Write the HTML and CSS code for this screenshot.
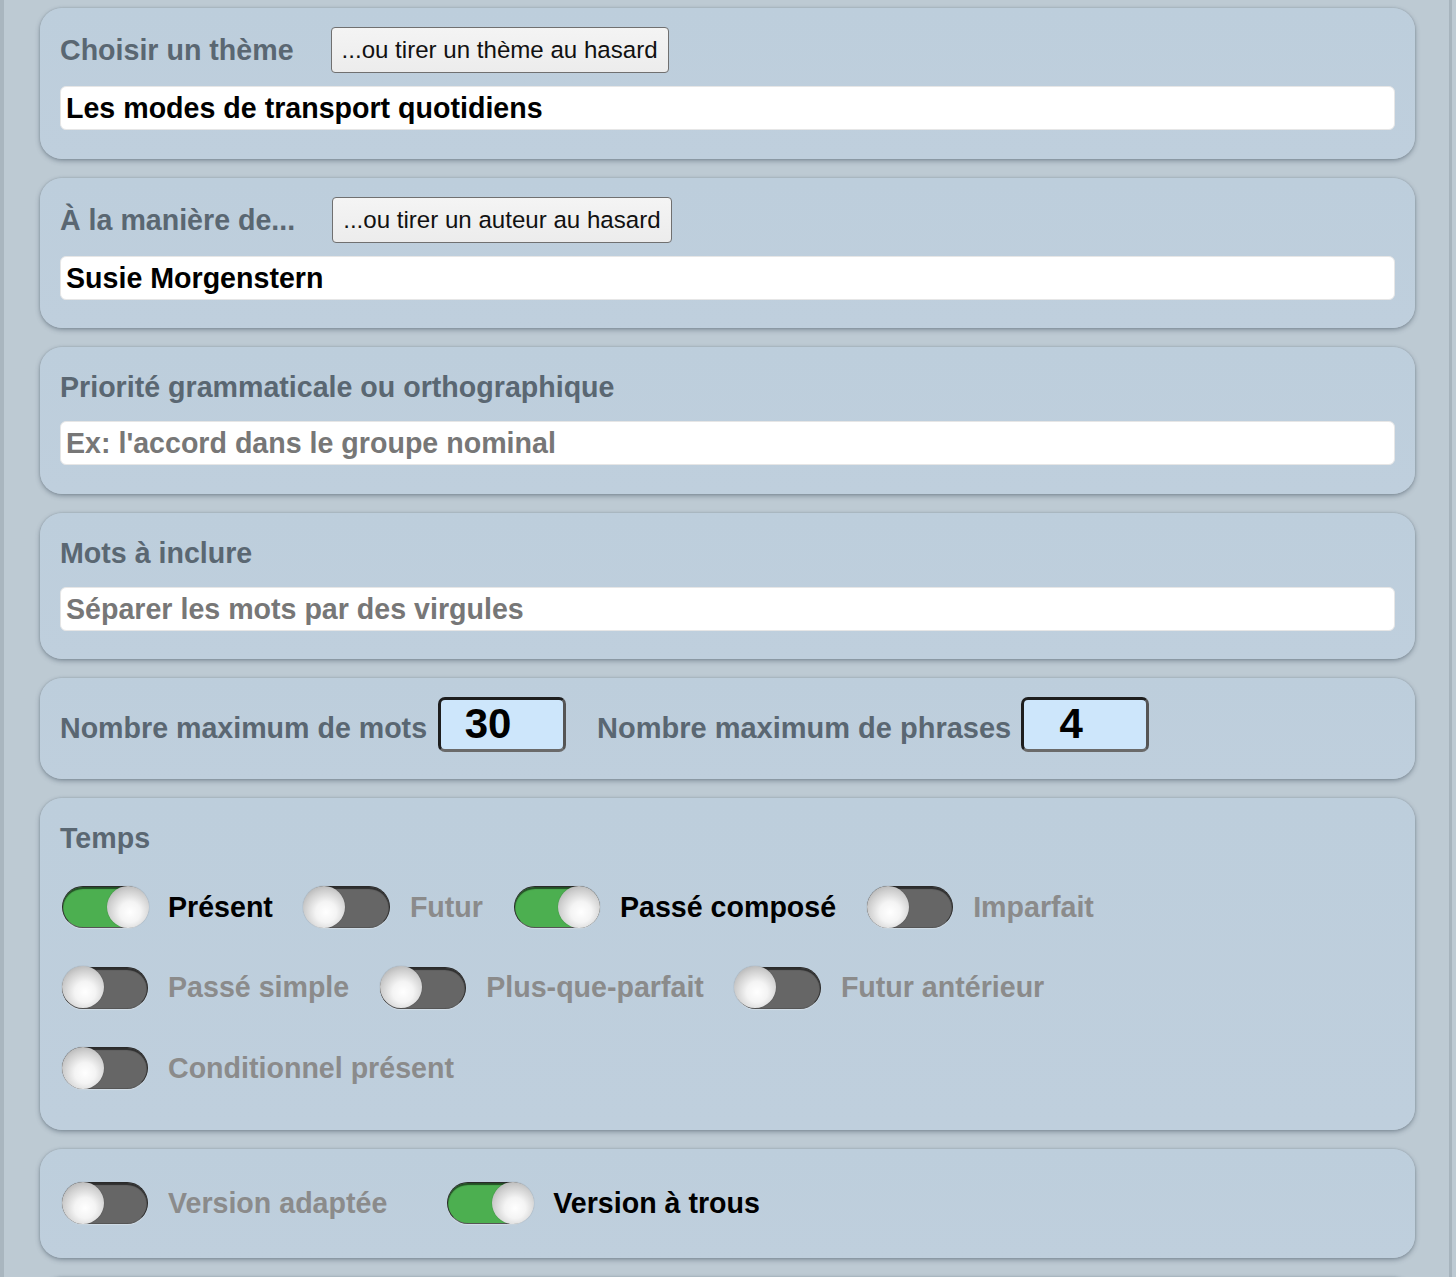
FILE: index.html
```html
<!DOCTYPE html>
<html lang="fr">
<head>
<meta charset="utf-8">
<title>Dictée</title>
<link rel="stylesheet" href="styles.css">
</head>
<body>
<div class="page">
  <section class="card">
    <div class="card-head">
      <span class="card-title">Choisir un thème</span>
      <button class="pick-btn">...ou tirer un thème au hasard</button>
    </div>
    <input class="field" type="text" value="Les modes de transport quotidiens">
  </section>

  <section class="card">
    <div class="card-head">
      <span class="card-title">À la manière de...</span>
      <button class="pick-btn">...ou tirer un auteur au hasard</button>
    </div>
    <input class="field" type="text" value="Susie Morgenstern">
  </section>

  <section class="card">
    <div class="card-head">
      <span class="card-title">Priorité grammaticale ou orthographique</span>
    </div>
    <input class="field" type="text" placeholder="Ex: l'accord dans le groupe nominal">
  </section>

  <section class="card">
    <div class="card-head">
      <span class="card-title">Mots à inclure</span>
    </div>
    <input class="field" type="text" placeholder="Séparer les mots par des virgules">
  </section>

  <section class="card card-numbers">
    <label class="num-label">Nombre maximum de mots</label>
    <input class="num-box" type="text" value="30">
    <label class="num-label">Nombre maximum de phrases</label>
    <input class="num-box" type="text" value="4">
  </section>

  <section class="card card-tenses">
    <div class="card-head">
      <span class="card-title">Temps</span>
    </div>
    <div class="toggles">
      <div class="toggle-row">
        <div class="toggle-item on"><span class="switch"><span class="knob"></span></span><span class="toggle-label">Présent</span></div>
        <div class="toggle-item"><span class="switch"><span class="knob"></span></span><span class="toggle-label">Futur</span></div>
        <div class="toggle-item on"><span class="switch"><span class="knob"></span></span><span class="toggle-label">Passé composé</span></div>
        <div class="toggle-item"><span class="switch"><span class="knob"></span></span><span class="toggle-label">Imparfait</span></div>
      </div>
      <div class="toggle-row">
        <div class="toggle-item"><span class="switch"><span class="knob"></span></span><span class="toggle-label">Passé simple</span></div>
        <div class="toggle-item"><span class="switch"><span class="knob"></span></span><span class="toggle-label">Plus-que-parfait</span></div>
        <div class="toggle-item"><span class="switch"><span class="knob"></span></span><span class="toggle-label">Futur antérieur</span></div>
      </div>
      <div class="toggle-row">
        <div class="toggle-item"><span class="switch"><span class="knob"></span></span><span class="toggle-label">Conditionnel présent</span></div>
      </div>
    </div>
  </section>

  <section class="card card-versions">
    <div class="toggle-item"><span class="switch"><span class="knob"></span></span><span class="toggle-label">Version adaptée</span></div>
    <div class="toggle-item on"><span class="switch"><span class="knob"></span></span><span class="toggle-label">Version à trous</span></div>
  </section>

  <section class="card card-next"></section>
</div>
</body>
</html>
```

FILE: styles.css
```css
html, body {
  margin: 0;
  padding: 0;
  height: 100%;
}

body {
  background: #bdcad3;
  font-family: "Liberation Sans", Arial, sans-serif;
  overflow: hidden;
}

.page {
  box-sizing: border-box;
  width: 1452px;
  min-height: 100%;
  border-left: 4px solid #a9b6bf;
  border-right: 3px solid #a7b4bd;
  background: #bdcad3;
  padding: 8px 34px 0 36px;
  display: flex;
  flex-direction: column;
  gap: 19px;
}

.card {
  box-sizing: border-box;
  width: 1375px;
  flex-shrink: 0;
  background: linear-gradient(180deg, #bdcedc 0%, #bfcfdd 100%);
  border-radius: 22px;
  box-shadow: 0 2px 5px rgba(60, 75, 90, 0.45), 0 0 2px rgba(60, 75, 90, 0.3);
  padding: 19px 20px 28.5px 20px;
  display: flex;
  flex-direction: column;
  gap: 13px;
}

.card-head {
  display: flex;
  align-items: center;
  gap: 37px;
}

.card-title {
  font-size: 28.6px;
  font-weight: bold;
  color: #5a6772;
  line-height: 42px;
  white-space: nowrap;
}

.pick-btn {
  height: 46px;
  box-sizing: border-box;
  padding: 0 10px;
  font-family: "Liberation Sans", Arial, sans-serif;
  font-size: 24.1px;
  color: #111;
  background: linear-gradient(180deg, #f4f4f4, #ececec);
  border: 1.5px solid #707070;
  border-radius: 4px;
}

.field {
  box-sizing: border-box;
  width: 1335px;
  height: 44px;
  flex-shrink: 0;
  border: 1px solid #e6e6e6;
  border-radius: 6px;
  background: #fff;
  padding: 1px 0 0 5px;
  font-family: "Liberation Sans", Arial, sans-serif;
  font-size: 28.6px;
  font-weight: bold;
  color: #000;
  outline: none;
}

.field::placeholder {
  color: #777;
  opacity: 1;
}

.card-numbers {
  flex-direction: row;
  align-items: center;
  gap: 0;
  height: 101px;
  padding: 19px 20px 27px 20px;
}

.num-label {
  font-size: 28.6px;
  font-weight: bold;
  color: #5a6772;
  white-space: nowrap;
  margin-top: 8px;
  margin-right: 11px;
}

.num-label:nth-of-type(2) {
  font-size: 29px;
  margin-left: 1px;
  margin-right: 10px;
}

.num-box {
  box-sizing: border-box;
  width: 128px;
  height: 55px;
  flex-shrink: 0;
  border: 3px solid #1e1e1e;
  border-bottom-color: #6a6a6a;
  border-right-color: #555;
  border-radius: 7px;
  background: #cde6fb;
  font-family: "Liberation Sans", Arial, sans-serif;
  font-size: 42px;
  font-weight: bold;
  color: #000;
  text-align: center;
  padding: 0 28px 2px 0;
  outline: none;
  margin-right: 30px;
}

.card-tenses {
  padding-bottom: 41px;
}

.toggles {
  display: flex;
  flex-direction: column;
  gap: 38.5px;
  padding: 14px 0 0 2px;
}

.toggle-row {
  display: flex;
  gap: 31px;
}

.toggle-item {
  display: flex;
  align-items: center;
  gap: 20px;
}

.switch {
  box-sizing: border-box;
  position: relative;
  display: block;
  width: 86px;
  height: 42px;
  border-radius: 21px;
  background: #666;
  border: 1.5px solid #2a2a2a;
  border-bottom-color: #555;
  box-shadow: inset 0 2px 1px rgba(0, 0, 0, 0.55), 0 1px 1px rgba(255, 255, 255, 0.3);
}

.toggle-item.on .switch {
  background: #4caf50;
}

.knob {
  position: absolute;
  top: -1.5px;
  left: -1.5px;
  width: 42px;
  height: 42px;
  border-radius: 50%;
  background: radial-gradient(circle at 55% 62%, #ffffff 0%, #f4f4f4 30%, #cfcfcf 62%, #9a9a9a 100%);
  box-shadow: 0 0 1px rgba(0, 0, 0, 0.4);
}

.toggle-item.on .knob {
  left: auto;
  right: -1.5px;
}

.toggle-label {
  font-size: 28.6px;
  font-weight: bold;
  color: #8b8b8b;
  white-space: nowrap;
}

.toggle-item.on .toggle-label {
  color: #000;
}

.card-versions {
  flex-direction: row;
  align-items: center;
  gap: 60px;
  padding: 33px 20px 34px 22px;
}

.card-next {
  min-height: 120px;
}
```
